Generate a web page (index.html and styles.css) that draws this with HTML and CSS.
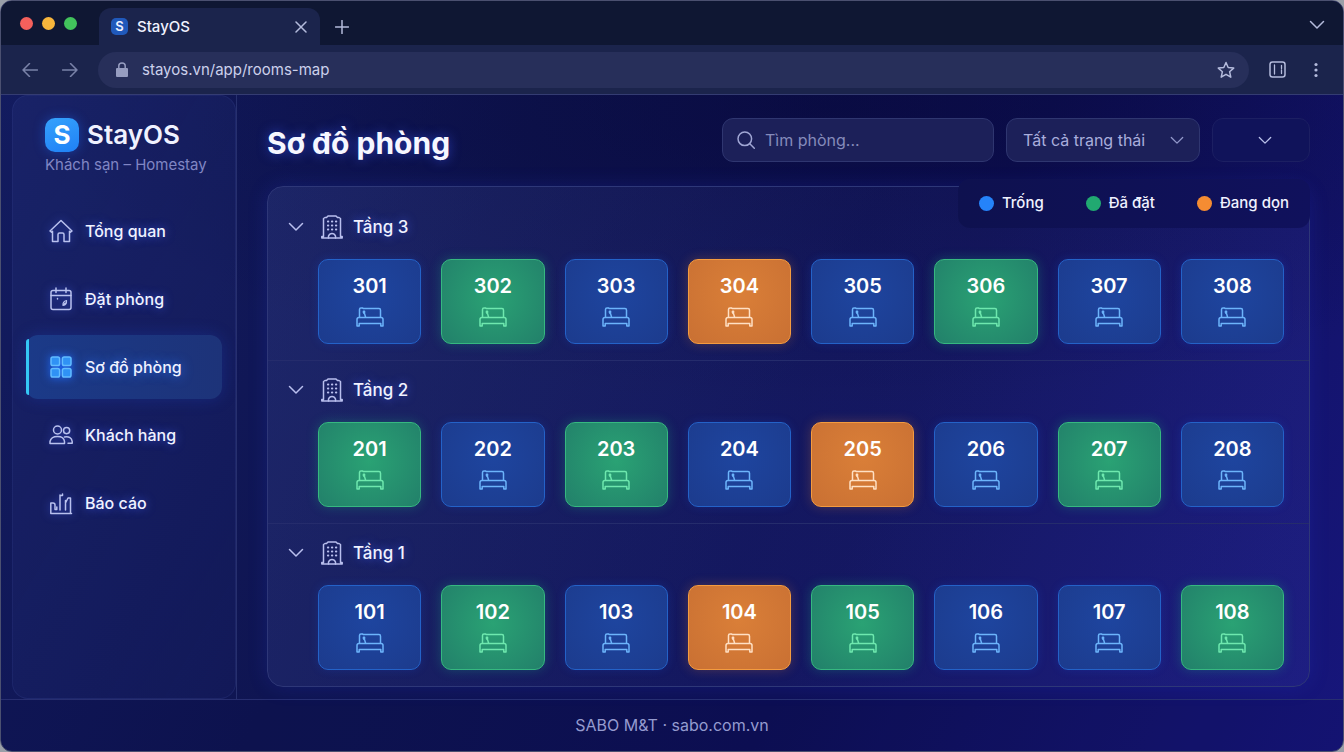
FILE: index.html
```html
<!DOCTYPE html>
<html lang="vi">
<head>
  <meta charset="utf-8">
  <meta name="viewport" content="width=device-width, initial-scale=1">
  <title>StayOS</title>
  <link rel="stylesheet" href="styles.css">
</head>
<body>
  <svg class="sprite" aria-hidden="true">
    <symbol id="i-bed" viewBox="0 0 28 20">
      <path d="M3.500 10V2.600Q3.500 1 5 1H6.500L7.500 1.600H23Q24.500 1.600 24.500 3.200V10"/>
      <path d="M1 19V12.500Q1 10.500 3 10.500H25Q27 10.500 27 12.500V19H24.800V16.500H3.200V19Z"/>
      <path d="M8 4.500V6.500M8.500 6.500Q9 8 9.500 10"/>
      <circle cx="8" cy="5" r=".7"/>
    </symbol>
    <symbol id="i-building" viewBox="0 0 22 24">
      <path d="M.8 23H21.200V21.500H19.500V3.500L18 2.500H16.500L15 1H7L5.500 2.500H4L2.500 3.500V21.500H.8Z"/>
      <path d="M7.500 23V21Q8.500 18.500 11 18.500T14.500 21V23"/>
      <path d="M7 6.500H7.200M11 6.500H11.200M15 6.500H15.200M7 10.500H7.200M11 10.500H11.200M15 10.500H15.200M7 14.500H7.200M11 14.500H11.200M15 14.500H15.200" stroke-width="2.200"/>
    </symbol>
    <symbol id="i-chevron" viewBox="0 0 16 10">
      <path d="M1.500 1.500L8 8L14.500 1.500"/>
    </symbol>
  </svg>

  <div class="window">
    <header class="tabs">
      <div class="lights">
        <span class="light red"></span>
        <span class="light yellow"></span>
        <span class="light green"></span>
      </div>
      <div class="tab">
        <span class="favicon">S</span>
        <span class="tab-title">StayOS</span>
        <button class="icon-btn" aria-label="Close tab">
          <svg width="12" height="12" viewBox="0 0 12 12"><path d="M1 1L11 11M11 1L1 11"/></svg>
        </button>
      </div>
      <button class="icon-btn new-tab" aria-label="New tab">
        <svg width="14" height="14" viewBox="0 0 14 14"><path d="M7 .5V13.500M.5 7H13.500"/></svg>
      </button>
      <button class="icon-btn tab-list" aria-label="Tabs">
        <svg width="16" height="10"><use href="#i-chevron"/></svg>
      </button>
    </header>

    <div class="toolbar">
      <button class="icon-btn dim" aria-label="Back">
        <svg width="16" height="14" viewBox="0 0 16 14"><path d="M15.500 7H1M7.500 .5L1 7L7.500 13.500"/></svg>
      </button>
      <button class="icon-btn dim" aria-label="Forward">
        <svg width="16" height="14" viewBox="0 0 16 14"><path d="M.5 7H15M8.500 .5L15 7L8.500 13.500"/></svg>
      </button>
      <div class="address">
        <svg class="lock" width="12" height="16" viewBox="0 0 12 16"><rect x="0" y="6" width="12" height="9" rx="1"/><path d="M2.800 7V3.800Q2.800 1 6 1T9.200 3.800V7"/></svg>
        <input type="text" aria-label="Address" value="stayos.vn/app/rooms-map">
        <button class="icon-btn" aria-label="Bookmark">
          <svg width="18" height="18" viewBox="0 0 18 18"><path d="M9 1.500L11.200 6.500L16.700 7.100L12.600 10.700L13.800 16.200L9 13.300L4.200 16.200L5.400 10.700L1.300 7.100L6.800 6.500Z"/></svg>
        </button>
      </div>
      <button class="icon-btn" aria-label="Side panel">
        <svg width="17" height="17" viewBox="0 0 17 17"><rect x="1" y="1" width="15" height="15" rx="2.500"/><path d="M5.500 4V13M12.500 4.500V7.500M12.500 9V12.500" stroke-width="1.300"/></svg>
      </button>
      <button class="icon-btn menu-btn" aria-label="Menu">
        <svg class="dots" width="4" height="16" viewBox="0 0 4 16"><circle cx="2" cy="2.500" r="1.600"/><circle cx="2" cy="8" r="1.600"/><circle cx="2" cy="13.500" r="1.600"/></svg>
      </button>
    </div>

    <div class="app">
      <aside class="sidebar">
        <div class="sidebar-panel">
          <div class="brand">
            <span class="brand-logo">S</span>
            <span class="brand-name">StayOS</span>
          </div>
          <p class="brand-sub">Khách sạn – Homestay</p>
          <nav class="nav">
            <a class="nav-item" href="#overview">
              <svg width="24" height="24" viewBox="0 0 24 24"><path d="M1 12L12 1.500L23 12L21.500 13.200L20.500 12.300V22.500H15V15.500Q15 14 13.500 14H10.500Q9 14 9 15.500V22.500H3.500V12.300L2.500 13.200Z"/></svg>
              Tổng quan
            </a>
            <a class="nav-item" href="#booking">
              <svg width="24" height="24" viewBox="0 0 24 24"><rect x="2" y="3.500" width="20" height="19" rx="2"/><path d="M2 8.500H22M7 1V5.500M17 1V5.500M8.500 11.500V12"/><path d="M14 18.500Q13.500 14.500 17.500 13.500Q18 17.500 14 18.500L16 16" stroke-width="1.200"/></svg>
              Đặt phòng
            </a>
            <a class="nav-item active" href="#rooms">
              <svg class="grid-icon" width="24" height="24" viewBox="0 0 24 24"><rect x="2" y="2" width="8.600" height="8.600" rx="1.800"/><rect x="13.400" y="2" width="8.600" height="8.600" rx="1.800"/><rect x="2" y="13.400" width="8.600" height="8.600" rx="1.800"/><rect x="13.400" y="13.400" width="8.600" height="8.600" rx="1.800"/></svg>
              Sơ đồ phòng
            </a>
            <a class="nav-item" href="#guests">
              <svg width="24" height="24" viewBox="0 0 24 24"><circle cx="8.500" cy="7" r="4"/><circle cx="17.600" cy="7.600" r="3.100"/><path d="M1 20.500V18.500Q2 13.500 8.500 13.500T15.500 18.500V20.500ZM15.500 14Q22.500 13 23.200 18.500V20.200H19"/></svg>
              Khách hàng
            </a>
            <a class="nav-item" href="#reports">
              <svg width="24" height="24" viewBox="0 0 24 24"><path d="M1.800 12V22.500H22.500M1.800 12H4Q6 12 6 14V18.500H7.800V16M11 4V19M11 4.500H13.500V3M16.500 19V9.500M16.500 12L19 7H21.500V22"/></svg>
              Báo cáo
            </a>
          </nav>
        </div>
      </aside>

      <main class="main">
        <div class="topbar">
          <h1>Sơ đồ phòng</h1>
          <label class="search">
            <svg width="18" height="18" viewBox="0 0 18 18"><circle cx="7.800" cy="7.800" r="6.800"/><path d="M12.800 12.800L17.300 17.300"/></svg>
            <input type="search" aria-label="Tìm phòng" placeholder="Tìm phòng...">
          </label>
          <div class="select status-select">
            <select aria-label="Trạng thái">
              <option>Tất cả trạng thái</option>
              <option>Trống</option>
              <option>Đã đặt</option>
              <option>Đang dọn</option>
            </select>
            <svg width="14" height="9"><use href="#i-chevron"/></svg>
          </div>
          <div class="select more-select">
            <select aria-label="Tùy chọn khác"><option></option></select>
            <svg width="14" height="9"><use href="#i-chevron"/></svg>
          </div>
        </div>

        <div class="board">
          <ul class="legend">
            <li><span class="dot free"></span>Trống</li>
            <li><span class="dot booked"></span>Đã đặt</li>
            <li><span class="dot cleaning"></span>Đang dọn</li>
          </ul>

          <section class="floor">
            <button class="floor-head"><svg class="chev" width="16" height="10"><use href="#i-chevron"/></svg><svg width="22" height="24"><use href="#i-building"/></svg>Tầng 3</button>
            <div class="rooms">
              <button class="room free">301<svg><use href="#i-bed"/></svg></button>
              <button class="room booked">302<svg><use href="#i-bed"/></svg></button>
              <button class="room free">303<svg><use href="#i-bed"/></svg></button>
              <button class="room cleaning">304<svg><use href="#i-bed"/></svg></button>
              <button class="room free">305<svg><use href="#i-bed"/></svg></button>
              <button class="room booked">306<svg><use href="#i-bed"/></svg></button>
              <button class="room free">307<svg><use href="#i-bed"/></svg></button>
              <button class="room free">308<svg><use href="#i-bed"/></svg></button>
            </div>
          </section>

          <section class="floor">
            <button class="floor-head"><svg class="chev" width="16" height="10"><use href="#i-chevron"/></svg><svg width="22" height="24"><use href="#i-building"/></svg>Tầng 2</button>
            <div class="rooms">
              <button class="room booked">201<svg><use href="#i-bed"/></svg></button>
              <button class="room free">202<svg><use href="#i-bed"/></svg></button>
              <button class="room booked">203<svg><use href="#i-bed"/></svg></button>
              <button class="room free">204<svg><use href="#i-bed"/></svg></button>
              <button class="room cleaning">205<svg><use href="#i-bed"/></svg></button>
              <button class="room free">206<svg><use href="#i-bed"/></svg></button>
              <button class="room booked">207<svg><use href="#i-bed"/></svg></button>
              <button class="room free">208<svg><use href="#i-bed"/></svg></button>
            </div>
          </section>

          <section class="floor">
            <button class="floor-head"><svg class="chev" width="16" height="10"><use href="#i-chevron"/></svg><svg width="22" height="24"><use href="#i-building"/></svg>Tầng 1</button>
            <div class="rooms">
              <button class="room free">101<svg><use href="#i-bed"/></svg></button>
              <button class="room booked">102<svg><use href="#i-bed"/></svg></button>
              <button class="room free">103<svg><use href="#i-bed"/></svg></button>
              <button class="room cleaning">104<svg><use href="#i-bed"/></svg></button>
              <button class="room booked">105<svg><use href="#i-bed"/></svg></button>
              <button class="room free">106<svg><use href="#i-bed"/></svg></button>
              <button class="room free">107<svg><use href="#i-bed"/></svg></button>
              <button class="room booked">108<svg><use href="#i-bed"/></svg></button>
            </div>
          </section>
        </div>
      </main>
    </div>

    <footer class="footer">SABO M&amp;T · <a href="#sabo">sabo.com.vn</a></footer>
  </div>
</body>
</html>
```
FILE: styles.css
```css
* {
  box-sizing: border-box;
}

body {
  margin: 0;
  background: #9a9fa8;
  font-family: Inter, "Noto Sans", sans-serif;
  font-size: 16px;
  color: #f0f2ff;
}

button,
input,
select {
  font: inherit;
  color: inherit;
  background: none;
  border: none;
  padding: 0;
  margin: 0;
  outline: none;
}

button {
  cursor: pointer;
}

a {
  color: inherit;
  text-decoration: none;
}

svg {
  display: block;
  flex: none;
  fill: none;
  stroke: currentColor;
  stroke-width: 1.5;
  stroke-linecap: round;
  stroke-linejoin: round;
}

.sprite {
  position: absolute;
  width: 0;
  height: 0;
}

.window {
  display: flex;
  flex-direction: column;
  min-height: 100vh;
  border: 1px solid #4b5070;
  border-radius: 12px;
  overflow: hidden;
  background:
    radial-gradient(ellipse 60% 40% at 62% 14%, rgba(5, 5, 50, 0.5), transparent),
    linear-gradient(115deg, #131c60 0%, #0f1552 35%, #0e1056 65%, #17167c 100%);
}

/* browser chrome */
.tabs {
  display: flex;
  align-items: flex-end;
  height: 44px;
  padding-right: 18px;
  background: #0f1733;
}

.lights {
  display: flex;
  gap: 9px;
  align-self: center;
  width: 98px;
  padding-left: 19px;
}

.light {
  width: 13px;
  height: 13px;
  border-radius: 50%;
}

.light.red { background: #f4605c; }
.light.yellow { background: #f8b63c; }
.light.green { background: #42c35c; }

.tab {
  display: flex;
  align-items: center;
  width: 221px;
  height: 37px;
  padding: 0 13px 0 12px;
  border-radius: 12px 12px 0 0;
  background: #1b244c;
}

.favicon {
  width: 17px;
  height: 17px;
  border-radius: 5px;
  background: #2059bb;
  font-size: 13px;
  font-weight: 600;
  line-height: 17px;
  text-align: center;
}

.tab-title {
  flex: 1;
  margin-left: 9px;
  font-size: 15px;
  font-weight: 500;
}

.icon-btn {
  display: flex;
  color: #b4bbdc;
}

.new-tab {
  align-self: center;
  margin-left: 15px;
  margin-top: 8px;
}

.tab-list {
  align-self: center;
  margin-left: auto;
  margin-top: 4px;
}

.toolbar {
  display: flex;
  align-items: center;
  gap: 20px;
  height: 50px;
  padding: 0 25px 0 21px;
  background: #1b244c;
  border-bottom: 1px solid #343c72;
}

.dim {
  color: #7a82a8;
}

.dim + .dim {
  margin-left: 4px;
}

.address {
  flex: 1;
  display: flex;
  align-items: center;
  height: 36px;
  padding: 0 14px 0 18px;
  border-radius: 18px;
  background: #272f5a;
}

.address input {
  flex: 1;
  margin-left: 14px;
  font-size: 15px;
  color: #ccd1ec;
}

.menu-btn {
  margin-left: 8px;
}

.lock {
  color: #969dc0;
}

.lock rect,
.dots circle {
  fill: currentColor;
  stroke: none;
}

/* layout */
.app {
  flex: 1;
  display: flex;
}

.sidebar {
  width: 236px;
  padding-left: 11px;
  border-right: 1px solid #27306e;
}

.sidebar-panel {
  height: 100%;
  padding: 22px 13px;
  border: 1px solid rgba(110, 125, 220, 0.1);
  border-radius: 16px;
  background: linear-gradient(120deg, rgba(50, 65, 140, 0.2), rgba(40, 50, 130, 0.12));
}

.brand {
  display: flex;
  align-items: center;
  gap: 8px;
  padding-left: 19px;
}

.brand-logo {
  width: 34px;
  height: 34px;
  border-radius: 10px;
  background: linear-gradient(160deg, #36a2fc, #1f80f6);
  box-shadow: 0 0 12px rgba(30, 110, 255, 0.4);
  font-size: 26px;
  font-weight: 700;
  line-height: 34px;
  text-align: center;
  color: #fff;
}

.brand-name {
  font-size: 26px;
  font-weight: 600;
  line-height: 34px;
}

.brand-sub {
  margin: 3px 0 24px 19px;
  font-size: 15px;
  line-height: 20px;
  color: #8086c4;
}

.nav {
  display: flex;
  flex-direction: column;
  gap: 4px;
}

.nav-item {
  display: flex;
  align-items: center;
  gap: 12px;
  height: 64px;
  padding-left: 20px;
  border-left: 3px solid transparent;
  border-radius: 12px;
  font-weight: 500;
  text-shadow: 0 0 10px rgba(70, 100, 255, 0.7);
}

.nav-item svg {
  color: #b9c1ee;
  filter: drop-shadow(0 0 4px rgba(70, 100, 255, 0.6));
}

.nav-item.active {
  position: relative;
  background: linear-gradient(90deg, #1b3a88, #1d3379);
  box-shadow: 0 0 16px rgba(30, 80, 220, 0.25);
  text-shadow: 0 0 12px #2f74ff;
}

.nav-item.active::before {
  content: "";
  position: absolute;
  left: -3px;
  top: 4px;
  bottom: 4px;
  width: 3px;
  border-radius: 3px 0 0 3px;
  background: #35c8f5;
}

.nav-item .grid-icon {
  fill: #2f92f5;
  color: #62bcff;
  filter: drop-shadow(0 0 5px #1f6dff);
}

.main {
  flex: 1;
  min-width: 0;
  padding: 23px 33px 12px 30px;
}

.topbar {
  display: flex;
  align-items: center;
  gap: 12px;
  margin-bottom: 24px;
}

h1 {
  flex: 1;
  margin: 0;
  padding-top: 6px;
  font-size: 30px;
  font-weight: 700;
  line-height: 38px;
  color: #f6f7ff;
  text-shadow: 0 0 12px rgba(60, 90, 255, 0.6);
}

.search,
.select {
  position: relative;
  display: flex;
  align-items: center;
  height: 44px;
  border: 1px solid #2f3670;
  border-radius: 11px;
  background: #1c2059;
}

.search {
  width: 272px;
  padding: 0 14px;
  gap: 10px;
  color: #a0a6d4;
}

.search input {
  flex: 1;
  min-width: 0;
}

.search input::placeholder {
  color: #858bbb;
  opacity: 1;
}

.select select {
  appearance: none;
  width: 100%;
  height: 100%;
  padding: 0 16px;
  color: #a9aedc;
}

.select svg {
  position: absolute;
  right: 15px;
  color: #9096c8;
  pointer-events: none;
}

.status-select {
  width: 194px;
}

.more-select {
  width: 98px;
  border-color: #1c1f62;
  background: #10135a;
}

.more-select svg {
  right: 37px;
  color: #b8bfe8;
}

/* room board */
.board {
  position: relative;
  border: 1px solid #2e3778;
  border-radius: 16px;
  background: linear-gradient(110deg, rgba(60, 74, 150, 0.3), rgba(50, 60, 150, 0.16) 50%, rgba(60, 65, 170, 0.2));
  box-shadow: 0 0 20px rgba(40, 60, 220, 0.2);
}

.legend {
  position: absolute;
  top: -8px;
  right: -1px;
  display: flex;
  gap: 42px;
  margin: 0;
  padding: 13px 21px 14px 21px;
  border-radius: 12px;
  background: linear-gradient(90deg, #0e114f, #10115c);
  list-style: none;
  font-size: 15px;
  font-weight: 500;
  line-height: 22px;
}

.legend li {
  display: flex;
  align-items: center;
  gap: 8px;
}

.dot {
  width: 15px;
  height: 15px;
  border-radius: 50%;
}

.dot.free { background: #2583fa; }
.dot.booked { background: #21a971; }
.dot.cleaning { background: #f58c32; }

.floor {
  padding: 15px 25px 16px 20px;
  border-top: 1px solid #252c6c;
}

.legend + .floor {
  padding-top: 26px;
  border-top: none;
}

.floor-head {
  display: flex;
  align-items: center;
  gap: 10px;
  height: 28px;
  margin-bottom: 18px;
  font-size: 17px;
  font-weight: 500;
  text-shadow: 0 0 10px rgba(70, 100, 255, 0.7);
}

.floor-head svg {
  color: #b9bfee;
}

.floor-head .chev {
  margin-right: 7px;
}

.rooms {
  display: grid;
  grid-template-columns: repeat(8, 1fr);
  gap: 20px;
  margin-left: 30px;
}

.room {
  display: flex;
  flex-direction: column;
  align-items: center;
  gap: 9px;
  height: 85px;
  padding-top: 14px;
  border: 1px solid;
  border-radius: 10px;
  font-size: 20px;
  font-weight: 600;
  line-height: 24px;
  color: #fff;
}

.room svg {
  width: 28px;
  height: 20px;
}

.room.free {
  border-color: #2462c8;
  background: radial-gradient(circle at 50% 40%, #1e459f, #1c3b8d);
  box-shadow: 0 0 10px rgba(30, 90, 230, 0.2);
}

.room.free svg { color: #6cb4fb; }

.room.booked {
  border-color: #36b880;
  background: radial-gradient(circle at 50% 45%, #2aa274, #22806a);
  box-shadow: 0 0 12px rgba(30, 180, 130, 0.3);
}

.room.booked svg { color: #6ee8ae; }

.room.cleaning {
  border-color: #f49b3f;
  background: radial-gradient(circle at 50% 40%, #da7f38, #c97033);
  box-shadow: 0 0 12px rgba(240, 140, 50, 0.25);
}

.room.cleaning svg { color: #ffe0c4; }

.footer {
  height: 52px;
  border-top: 1px solid #272e70;
  background: rgba(10, 10, 60, 0.15);
  font-size: 16px;
  line-height: 51px;
  text-align: center;
  color: #959bcf;
}
```
